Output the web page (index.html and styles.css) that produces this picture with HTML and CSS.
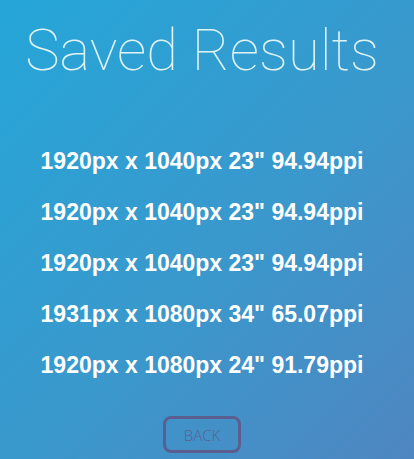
FILE: index.html
```html
<!DOCTYPE html>
<html>
<head>
<meta charset="utf-8">
<link rel="stylesheet" href="styles.css">
</head>
<body>
<main class="page">
  <h1 class="title">Saved Results</h1>
  <ul class="results">
    <li>1920px x 1040px 23" 94.94ppi</li>
    <li>1920px x 1040px 23" 94.94ppi</li>
    <li>1920px x 1040px 23" 94.94ppi</li>
    <li>1931px x 1080px 34" 65.07ppi</li>
    <li>1920px x 1080px 24" 91.79ppi</li>
  </ul>
  <button class="back">BACK</button>
</main>
</body>
</html>
```

FILE: styles.css
```css
html, body {
  margin: 0;
  height: 100%;
}
body {
  background: linear-gradient(135deg, #25a6d8 0%, #3a98cc 55%, #4f86c1 100%);
  overflow: hidden;
}
.page {
  display: flex;
  flex-direction: column;
  align-items: center;
  height: 459px;
  padding-right: 10px;
}
.title {
  margin: 14px 0 0;
  font-family: Roboto, sans-serif;
  font-weight: 100;
  font-size: 58px;
  line-height: 72px;
  color: #dff3f3;
  letter-spacing: 0;
}
.results {
  list-style: none;
  margin: 61px 0 0;
  padding: 0;
  display: flex;
  flex-direction: column;
  align-items: center;
  gap: 23px;
}
.results li {
  font-family: "Liberation Sans", Arial, sans-serif;
  font-weight: bold;
  font-size: 23px;
  line-height: 28px;
  color: #ffffff;
}
.back {
  margin-top: 37px;
  width: 78px;
  height: 37px;
  border: 3px solid #5b5f8f;
  border-radius: 8px;
  background: transparent;
  font-family: "Open Sans", sans-serif;
  font-weight: 300;
  font-size: 15px;
  color: #5b5f8f;
  padding: 0;
}
```
